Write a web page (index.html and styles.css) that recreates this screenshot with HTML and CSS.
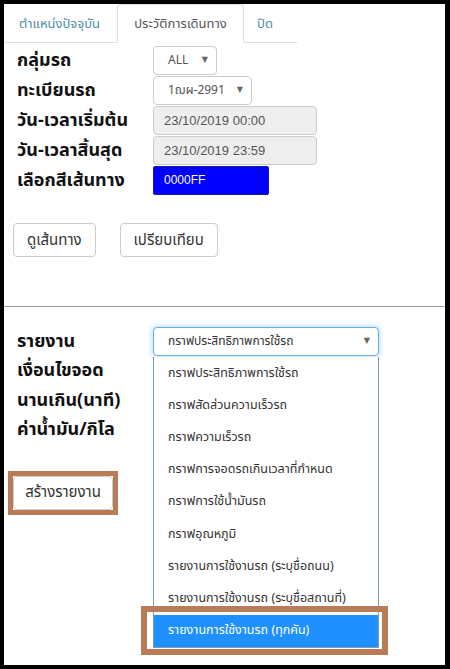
FILE: index.html
```html
<!DOCTYPE html>
<html lang="th">
<head>
    <meta charset="UTF-8">
    <meta name="viewport" content="width=device-width, initial-scale=1.0">
    <title>ประวัติการเดินทาง</title>
    <link rel="stylesheet" href="styles.css">
</head>
<body>
    <div class="frame">
        <ul class="tabs">
            <li class="tab tab-now">ตำแหน่งปัจจุบัน</li>
            <li class="tab tab-history active">ประวัติการเดินทาง</li>
            <li class="tab tab-close">ปิด</li>
        </ul>

        <div class="form">
            <div class="row">
                <label>กลุ่มรถ</label>
                <div class="select select-group"><span>ALL</span><span class="arrow">▼</span></div>
            </div>
            <div class="row">
                <label>ทะเบียนรถ</label>
                <div class="select select-plate"><span>1ฌผ-2991</span><span class="arrow">▼</span></div>
            </div>
            <div class="row">
                <label>วัน-เวลาเริ่มต้น</label>
                <div class="input disabled">23/10/2019 00:00</div>
            </div>
            <div class="row">
                <label>วัน-เวลาสิ้นสุด</label>
                <div class="input disabled">23/10/2019 23:59</div>
            </div>
            <div class="row">
                <label>เลือกสีเส้นทาง</label>
                <div class="input color">0000FF</div>
            </div>

            <div class="actions">
                <button class="btn">ดูเส้นทาง</button>
                <button class="btn">เปรียบเทียบ</button>
            </div>
        </div>

        <hr class="divider">

        <div class="form report">
            <div class="row">
                <label>รายงาน</label>
                <div class="select select-report focus"><span>กราฟประสิทธิภาพการใช้รถ</span><span class="arrow">▼</span></div>
            </div>
            <div class="row short"><label>เงื่อนไขจอด</label></div>
            <div class="row short"><label>นานเกิน(นาที)</label></div>
            <div class="row short"><label>ค่าน้ำมัน/กิโล</label></div>

            <div class="mark mark-btn">
                <button class="btn">สร้างรายงาน</button>
            </div>
        </div>

        <ul class="dropdown">
            <li>กราฟประสิทธิภาพการใช้รถ</li>
            <li>กราฟสัดส่วนความเร็วรถ</li>
            <li>กราฟความเร็วรถ</li>
            <li>กราฟการจอดรถเกินเวลาที่กำหนด</li>
            <li>กราฟการใช้น้ำมันรถ</li>
            <li>กราฟอุณหภูมิ</li>
            <li>รายงานการใช้งานรถ (ระบุชื่อถนน)</li>
            <li>รายงานการใช้งานรถ (ระบุชื่อสถานที่)</li>
            <li class="selected">รายงานการใช้งานรถ (ทุกคัน)</li>
        </ul>
        <div class="mark mark-option"></div>
    </div>
</body>
</html>
```

FILE: styles.css
```css
* { box-sizing: border-box; }
body { margin: 0; background: #000; font-family: Tahoma, "Noto Sans Thai", Loma, Garuda, "DejaVu Sans", sans-serif; }
.frame { position: relative; height: 669px; background: #fff; border: solid #000; border-width: 4px 5px 4px 4px; }

.tabs { display: flex; width: 293px; height: 39px; margin: 0; padding: 0; list-style: none; border-bottom: 1px solid #ddd; }
.tab { display: flex; align-items: center; justify-content: center; height: 39px; font-size: 13px; color: #4a8fa6; }
.tab-now { width: 111px; margin-right: 2px; }
.tab-history { width: 127px; margin-right: 2px; }
.tab-close { width: 38px; }
.tab.active { color: #555; background: #fff; border: 1px solid #ddd; border-bottom-color: transparent; border-radius: 4px 4px 0 0; }

.form { padding: 2px 0 0 9px; }
.row { display: flex; align-items: center; height: 30px; }
.row label { width: 140px; padding-left: 4px; font-size: 18px; font-weight: bold; color: #111; }
.row.short { height: 29.5px; }

.select { display: flex; align-items: center; justify-content: space-between; height: 29px; padding: 0 8px 0 14px; font-size: 12px; color: #555; background: #fff; border: 1px solid #ccc; border-radius: 4px; }
.select .arrow { font-size: 8px; color: #666; }
.select-group { width: 64px; }
.select-plate { width: 99px; }
.select-report { width: 226px; color: #333; }
.select.focus { border-color: #66afe9; box-shadow: 0 0 6px rgba(102, 175, 233, 0.6); }

.input { display: flex; align-items: center; height: 29px; padding-left: 10px; font-family: "Liberation Sans", Arial, sans-serif; font-size: 13px; color: #555; border: 1px solid #ccc; border-radius: 4px; }
.input.disabled { width: 164px; background: #eee; }
.input.color { width: 116px; height: 29px; color: #fff; background: #0000ff; border-color: #1a1a8a; border-radius: 2px; font-size: 12px; }

.actions { display: flex; gap: 24px; margin-top: 28px; }
.btn { height: 34px; padding: 0 13px; font-family: inherit; font-size: 15px; color: #333; background: #fff; border: 1px solid #ccc; border-radius: 4px; white-space: nowrap; }

.divider { margin: 49px 0 0; border: 0; border-top: 1px solid #a0a0a0; }

.report { padding-top: 19px; }

.mark { border: 5px solid #b97c58; }
.mark-btn { display: inline-block; margin: 26px 0 0 -5px; }
.mark-btn .btn { display: block; width: 100px; height: 34px; padding: 0; }

.dropdown { position: absolute; top: 353px; left: 149px; width: 226px; height: 291px; margin: 0; padding: 0; list-style: none; background: #fff; border: 1px solid #7f9db9; border-top: 0; }
.dropdown li { display: flex; align-items: center; height: 32.2px; padding-left: 14px; font-size: 12.5px; color: #333; }
.dropdown li.selected { color: #fff; background: #1e90ff; }
.mark-option { position: absolute; top: 602px; left: 137px; width: 247px; height: 49px; border-width: 6px; }
```
